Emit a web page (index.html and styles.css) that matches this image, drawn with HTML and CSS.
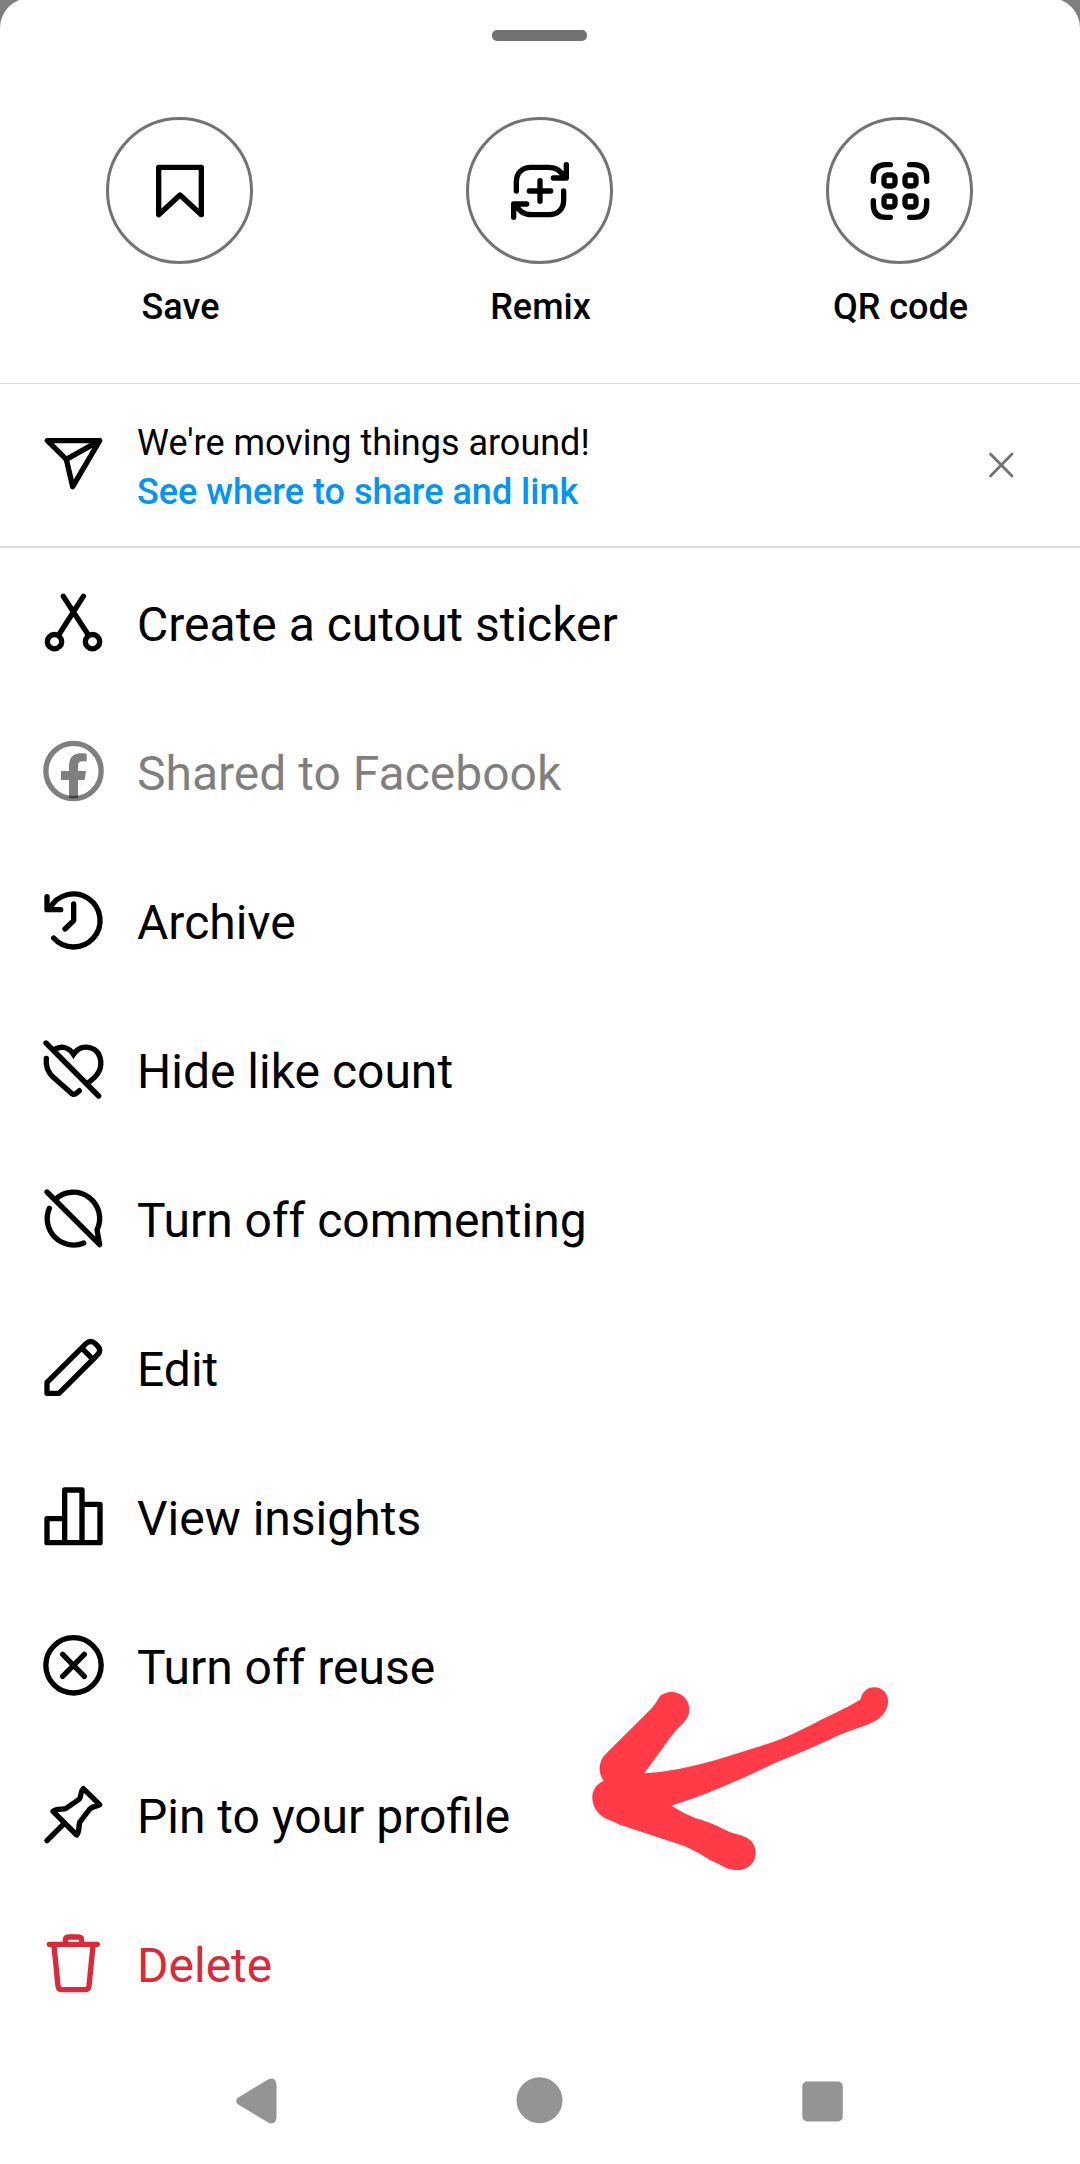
FILE: index.html
```html
<!DOCTYPE html>
<html lang="en">
<head>
<meta charset="utf-8">
<title>Post options</title>
<link rel="stylesheet" href="styles.css">
</head>
<body>
<main class="sheet">
  <div class="handle"></div>

  <section class="actions">
    <div class="action">
      <span class="ring"><svg class="icon" viewBox="-108 -108 216 216"><path d="M-64-71H64V71L0 12-64 71Z"/></svg></span>
      <span class="action-label">Save</span>
    </div>
    <div class="action">
      <span class="ring"><svg class="icon" viewBox="-108 -108 216 216">
        <path d="M-71 0V-27C-71-54-54-71-27-71H25C50-71 62-60 74-41M79-79V-39H40"/>
        <path d="M71 0V27C71 54 54 71 27 71H-25C-50 71-62 60-74 41M-79 79V39H-40"/>
        <path d="M0-31V31M-32 0H32"/></svg></span>
      <span class="action-label">Remix</span>
    </div>
    <div class="action">
      <span class="ring"><svg class="icon" viewBox="-108 -108 216 216">
        <path d="M-80-29V-41Q-80-79-42-79H-29M29-79H42Q80-79 80-41V-29M80 29V41Q80 79 42 79H29M-29 79H-42Q-80 79-80 41V29"/>
        <rect x="-48" y="-48" width="33" height="33" rx="10"/><rect x="15" y="-48" width="33" height="33" rx="10"/>
        <rect x="-48" y="15" width="33" height="33" rx="10"/><rect x="15" y="15" width="33" height="33" rx="10"/></svg></span>
      <span class="action-label">QR code</span>
    </div>
  </section>

  <section class="banner">
    <svg class="icon" viewBox="111 177 216 216"><path d="M142 212H299L218 350 199 268ZM199 268L299 212"/></svg>
    <div class="banner-text">
      <div>We're moving things around!</div>
      <div class="banner-link">See where to share and link</div>
    </div>
    <svg class="icon close" viewBox="-36 -36 72 72"><path d="M-10.5-11 11 11M11-11-10.5 11"/></svg>
  </section>

  <ul class="menu">
    <li class="item">
      <svg class="icon" viewBox="111 648 216 216"><path d="M190 679L265 795M250 679L176 795"/><circle cx="163.500" cy="815" r="21.500"/><circle cx="277.500" cy="815" r="21.500"/></svg>
      <span>Create a cutout sticker</span>
    </li>
    <li class="item disabled">
      <svg class="icon" viewBox="111 105 216 216"><circle cx="220.500" cy="213" r="83"/><path class="solid" d="M207 295V240H183V213H207V198C207 174 220 160 242 160Q252 159 260 161V184H248C238 184 234 188 234 197V213H258L254 240H234V295Z"/></svg>
      <span>Shared to Facebook</span>
    </li>
    <li class="item">
      <svg class="icon" viewBox="111 552 216 216"><path d="M161 714A79.500 79.500 0 1 0 150 625M141 590V629H182M221 612V662L195 687"/></svg>
      <span>Archive</span>
    </li>
    <li class="item">
      <svg class="icon" viewBox="111 99 216 216"><path d="M138 129L296 288"/><path class="sharp" d="M164 148C186 135 208 143 220.500 163C236 140 262 136 282 148C305 163 310 200 290 225C283 235 272 242 262 251"/><path d="M139 175C136 200 145 218 160 232L210 276Q220 288 230 279L238 272"/></svg>
      <span>Hide like count</span>
    </li>
    <li class="item">
      <svg class="icon" viewBox="111 546 216 216"><path d="M141 576L299 734L291 690A78.900 78.900 0 0 0 166 598M148 625A79 79 0 0 0 251 729"/></svg>
      <span>Turn off commenting</span>
    </li>
    <li class="item">
      <svg class="icon" viewBox="111 93 216 216"><path d="M141 280V247L258 131Q272 118 286 131L293 138Q306 151 292 165L177 280ZM247 146L276 175"/></svg>
      <span>Edit</span>
    </li>
    <li class="item">
      <svg class="icon" viewBox="111 540 216 216"><path d="M194 570H246V728H194ZM194 656H141V728H194M246 613H300V728H246"/></svg>
      <span>View insights</span>
    </li>
    <li class="item">
      <svg class="icon" viewBox="111 87 216 216"><circle cx="220.500" cy="196" r="83"/><path d="M188 163L253 229M253 163L188 229"/></svg>
      <span>Turn off reuse</span>
    </li>
    <li class="item">
      <svg class="icon" viewBox="111 534 216 216"><path d="M141 722L192 671M250 566L299 614C288 621 275 618 267 630L239 667C235 680 240 692 230 705L159 634C170 624 185 629 197 626L236 599C246 592 238 578 250 566Z"/></svg>
      <span>Pin to your profile</span>
    </li>
    <li class="item danger">
      <svg class="icon" viewBox="111 981 216 216"><path d="M148 1033H292M196 1028V1021Q196 1011 206 1011H235Q245 1011 245 1021V1028M162 1037L174 1158Q175 1169 186 1169H254Q266 1169 267 1158L279 1037"/></svg>
      <span>Delete</span>
    </li>
  </ul>

  <nav class="navbar">
    <svg class="nav-icon" viewBox="-36 -36 72 72"><path d="M-19.500-3Q-22 0-19.500 3L12 22Q19 24 19.500 16V-16Q19-24 12-22Z"/></svg>
    <svg class="nav-icon" viewBox="-36 -36 72 72"><circle cx="-.5" cy="-.7" r="23"/></svg>
    <svg class="nav-icon" viewBox="-36 -36 72 72"><rect x="-20.700" y="-19.500" width="40.500" height="40" rx="5"/></svg>
  </nav>

  <svg class="pointer" viewBox="0 0 1080 720">
    <path d="M300 108C336 80 388 104 388 148Q388 170 371 188Q350 206 330 234L253 340Q350 334 470 299L640 246C700 225 770 185 830 157Q880 133 902 118C906 96 922 82 943 82C968 82 985 102 984 128C983 150 965 178 925 193C880 210 870 211 830 229C770 257 720 280 640 311C560 350 440 405 334 437Q370 460 405 474Q450 486 490 507Q506 516 525 521Q587 533 587 578C587 620 545 641 500 625Q475 611 450 600Q415 577 375 559L180 494Q158 484 136 475C90 450 80 385 131 362C112 338 115 303 140 279L275 145Q288 130 300 108Z"/>
  </svg>
</main>
</body>
</html>
```

FILE: styles.css
```css
* { box-sizing: border-box; }

body {
  margin: 0;
  height: 2164px;
  overflow: hidden;
  background: #808080;
  color: #000;
  font-family: Roboto, "Liberation Sans", sans-serif;
}

.sheet {
  position: relative;
  display: flex;
  flex-direction: column;
  height: 2166px;
  margin-top: -2px;
  padding-top: 32px;
  background: #fff;
  border-radius: 30px 30px 0 0;
}

.handle {
  align-self: center;
  width: 95px;
  height: 11px;
  margin-right: 1px;
  border-radius: 5px;
  background: #737373;
}

.actions {
  display: grid;
  grid-template-columns: repeat(3, 1fr);
  height: 343px;
  padding-top: 76px;
  border-bottom: 1px solid #dbdbdb;
}

.action {
  display: flex;
  flex-direction: column;
  align-items: center;
}

.ring {
  display: flex;
  align-items: center;
  justify-content: center;
  width: 147px;
  height: 147px;
  margin-right: 1px;
  border: 3px solid #737373;
  border-radius: 50%;
}

.action-label {
  margin-top: 21px;
  padding-left: 1px;
  font-size: 36px;
  font-weight: 500;
  line-height: 44px;
}

.icon {
  flex: none;
  width: 72px;
  height: 72px;
  fill: none;
  stroke: currentColor;
  stroke-width: 16px;
  stroke-linecap: round;
  stroke-linejoin: round;
}

.icon .solid { fill: currentColor; stroke: none; }
.icon .sharp { stroke-linejoin: miter; }
.icon.close { color: #737373; stroke-width: 2.8px; }

.banner {
  display: flex;
  align-items: center;
  gap: 28px;
  height: 164px;
  padding: 0 43px 0 37px;
  border-bottom: 2px solid #dbdbdb;
}

.banner-text {
  flex: 1;
  padding-top: 6px;
  font-size: 36px;
  line-height: 49px;
}

.banner-link {
  color: #0095f6;
  font-weight: 500;
}

.menu {
  margin: 0;
  padding: 0;
  list-style: none;
}

.item {
  display: flex;
  gap: 28px;
  height: 149px;
  padding: 38px 37px 0;
  font-size: 48px;
  line-height: 77px;
}

.disabled { color: rgba(0, 0, 0, .5); }
.danger { color: #dc2837; }

.navbar {
  display: grid;
  grid-template-columns: repeat(3, 283px);
  place-content: center;
  justify-items: center;
  height: 126px;
}

.nav-icon {
  width: 72px;
  height: 72px;
  fill: #949494;
}

/* Hand-drawn marker over the menu */
.pointer {
  position: absolute;
  left: 560px;
  top: 1662px;
  width: 360px;
  height: 240px;
  fill: #ff3b47;
}
```
